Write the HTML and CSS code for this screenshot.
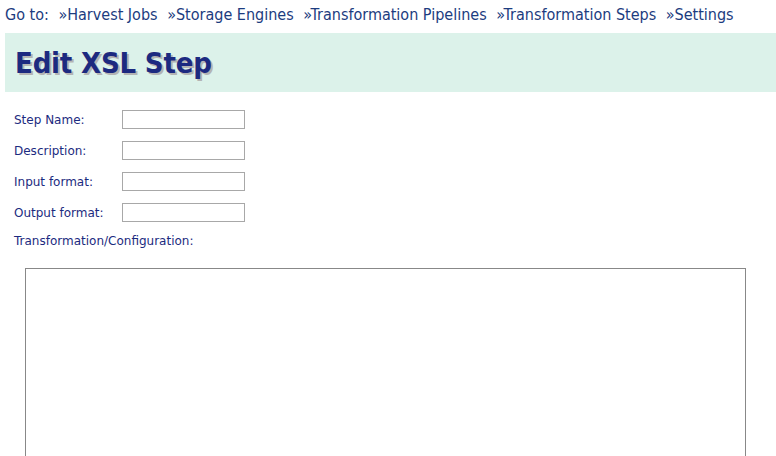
FILE: index.html
```html
<!DOCTYPE html>
<html>
<head>
<meta charset="utf-8">
<link rel="stylesheet" href="styles.css">
</head>
<body>
<div class="nav">Go to: <a href="#">»Harvest Jobs</a> <a href="#">»Storage Engines</a> <a href="#">»Transformation Pipelines</a> <a href="#">»Transformation Steps</a> <a href="#">»Settings</a></div>
<div class="banner"><h1>Edit XSL Step</h1></div>
<form class="form">
  <div class="row"><label>Step Name:</label><input type="text" class="field"></div>
  <div class="row"><label>Description:</label><input type="text" class="field"></div>
  <div class="row"><label>Input format:</label><input type="text" class="field"></div>
  <div class="row"><label>Output format:</label><input type="text" class="field"></div>
  <div class="caption">Transformation/Configuration:</div>
  <textarea class="config"></textarea>
</form>
</body>
</html>
```
FILE: styles.css
```css
html, body { margin: 0; padding: 0; background: #fff; }
body {
  padding: 0 0 0 5px;
  font-family: "DejaVu Sans Condensed", "DejaVu Sans", sans-serif;
  color: #1c2b80;
  overflow: hidden;
}
.nav {
  font-size: 16px;
  line-height: 20px;
  padding-top: 5px;
  height: 28px;
  color: #1c3c80;
  white-space: nowrap;
}
.nav a { color: #1c3c80; text-decoration: none; margin-left: 5px; }
.banner {
  background: #dcf2ea;
  height: 59px;
  display: flex;
  align-items: center;
  padding-left: 10px;
}
.banner h1 {
  margin: 0;
  font-size: 29px;
  font-weight: bold;
  color: #1c2a80;
  letter-spacing: -0.2px;
  text-shadow: 2px 2px 0 #b4b4b4;
}
.form {
  padding: 18px 0 0 9px;
  font-size: 12px;
  font-family: "DejaVu Sans", sans-serif;
}
.row { display: flex; align-items: center; height: 19px; margin-bottom: 12px; }
.row label { width: 108px; }
.field {
  box-sizing: border-box;
  width: 123px;
  height: 19px;
  margin: 0;
  border: 1px solid #a8a8a8;
  background: #fff;
}
.caption { line-height: 14px; }
.config {
  display: block;
  box-sizing: border-box;
  margin: 20px 0 0 11px;
  width: 721px;
  height: 300px;
  border: 1px solid #888;
  resize: none;
  background: #fff;
}
```
